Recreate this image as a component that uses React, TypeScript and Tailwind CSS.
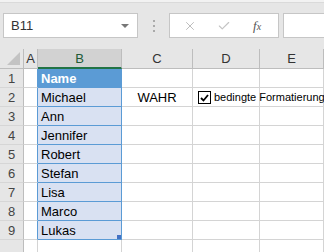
import { Check, X } from 'lucide-react'

const names = ['Michael', 'Ann', 'Jennifer', 'Robert', 'Stefan', 'Lisa', 'Marco', 'Lukas']
const cols = ['A', 'B', 'C', 'D', 'E']

function RowHeader({ n }: { n?: number }) {
  return (
    <div className="h-[19px] border-r border-b border-r-[#bdbdbd] border-b-[#d6d6d6] bg-[#e6e6e6] text-center text-[13px] leading-[20px] text-[#444]">
      {n}
    </div>
  )
}

function Cell({ children, className = '' }: { children?: React.ReactNode; className?: string }) {
  return (
    <div className={`h-[19px] border-r border-b border-[#d4d4d4] text-[13px] leading-[20px] text-black whitespace-nowrap ${className}`}>
      {children}
    </div>
  )
}

export default function App() {
  return (
    <div className="relative w-[324px] h-[252px] overflow-hidden bg-white font-['Liberation_Sans',Arial,sans-serif]">
      {/* Formula bar */}
      <div className="h-[49px] bg-[#e6e6e6]">
        <div className="h-[3px] bg-[#f2f2f2] border-b border-[#dadada]" />
        <div className="flex items-center pt-[10px] pl-[3px]">
          <div className="flex h-[25px] w-[135px] items-center justify-between border border-[#c6c6c6] bg-white pl-[7px] pr-[8px]">
            <span className="text-[13px] text-[#333]">B11</span>
            <span className="h-0 w-0 border-x-[4px] border-t-[4px] border-x-transparent border-t-[#777]" />
          </div>
          <div className="flex w-[31px] flex-col items-center gap-[3px]">
            <span className="h-[2px] w-[2px] bg-[#aaa]" />
            <span className="h-[2px] w-[2px] bg-[#aaa]" />
            <span className="h-[2px] w-[2px] bg-[#aaa]" />
          </div>
          <div className="flex h-[25px] w-[110px] items-center border border-[#c6c6c6] bg-white">
            <X size={14} strokeWidth={1.5} className="ml-[13px] text-[#b4b4b4]" />
            <Check size={14} strokeWidth={2} className="ml-[20px] text-[#c4c4c4]" />
            <span className="ml-[22px] font-['Liberation_Serif',serif] text-[13px] italic text-[#555]">
              f<span className="text-[10px]">x</span>
            </span>
          </div>
          <div className="ml-[4px] h-[25px] flex-1 border border-r-0 border-[#c6c6c6] bg-white" />
        </div>
      </div>

      {/* Grid */}
      <div className="grid grid-cols-[24px_14px_84px_71px_67px_64px]">
        {/* header row */}
        <div className="relative h-[20px] border-r border-b border-[#bdbdbd] bg-[#e6e6e6]">
          <span className="absolute right-[3px] bottom-[3px] h-0 w-0 border-l-[13px] border-l-transparent [border-bottom:13px_solid_#c3c3c3]" />
        </div>
        {cols.map((c) => (
          <div
            key={c}
            className={`h-[20px] border-r border-[#bdbdbd] text-center text-[13px] leading-[19px] ${
              c === 'B'
                ? 'bg-[#d2d2d2] border-b-2 border-b-[#217346] text-[#215a36]'
                : 'bg-[#e6e6e6] border-b border-b-[#bdbdbd] text-[#333]'
            }`}
          >
            {c}
          </div>
        ))}

        {/* rows 1-9 */}
        {['Name', ...names].map((name, i) => (
          <Row key={i} n={i + 1} name={name} />
        ))}

        {/* row 10, cut off by the window */}
        <RowHeader />
        <Cell />
        <Cell />
        <Cell />
        <Cell />
        <Cell />
      </div>

      {/* Form-control checkbox over D2 */}
      <div className="absolute left-[198px] top-[91px] flex items-center gap-[3px]">
        <div className="flex h-[13px] w-[13px] items-center justify-center border border-black bg-white">
          <svg width="9" height="8" viewBox="0 0 9 8">
            <path d="M1 4 L3.5 6.5 L8 1" fill="none" stroke="black" strokeWidth="1.8" />
          </svg>
        </div>
        <span className="whitespace-nowrap text-[11px] leading-[13px] text-black">bedingte Formatierung</span>
      </div>
    </div>
  )
}

function Row({ n, name }: { n: number; name: string }) {
  const header = n === 1
  return (
    <>
      <RowHeader n={n} />
      <Cell className="border-r-[#5b9bd5]" />
      <div
        className={`relative h-[19px] border-r border-b border-[#5b9bd5] pl-[3px] text-[13px] leading-[20px] whitespace-nowrap ${
          header ? 'bg-[#5b9bd5] font-bold text-white' : 'bg-[#d9e1f2] text-black'
        }`}
      >
        {name}
        {n === 9 && <span className="absolute right-0 bottom-0 h-[4px] w-[4px] bg-[#4472c4]" />}
      </div>
      <Cell className="text-center">{n === 2 ? 'WAHR' : null}</Cell>
      <Cell />
      <Cell />
    </>
  )
}
